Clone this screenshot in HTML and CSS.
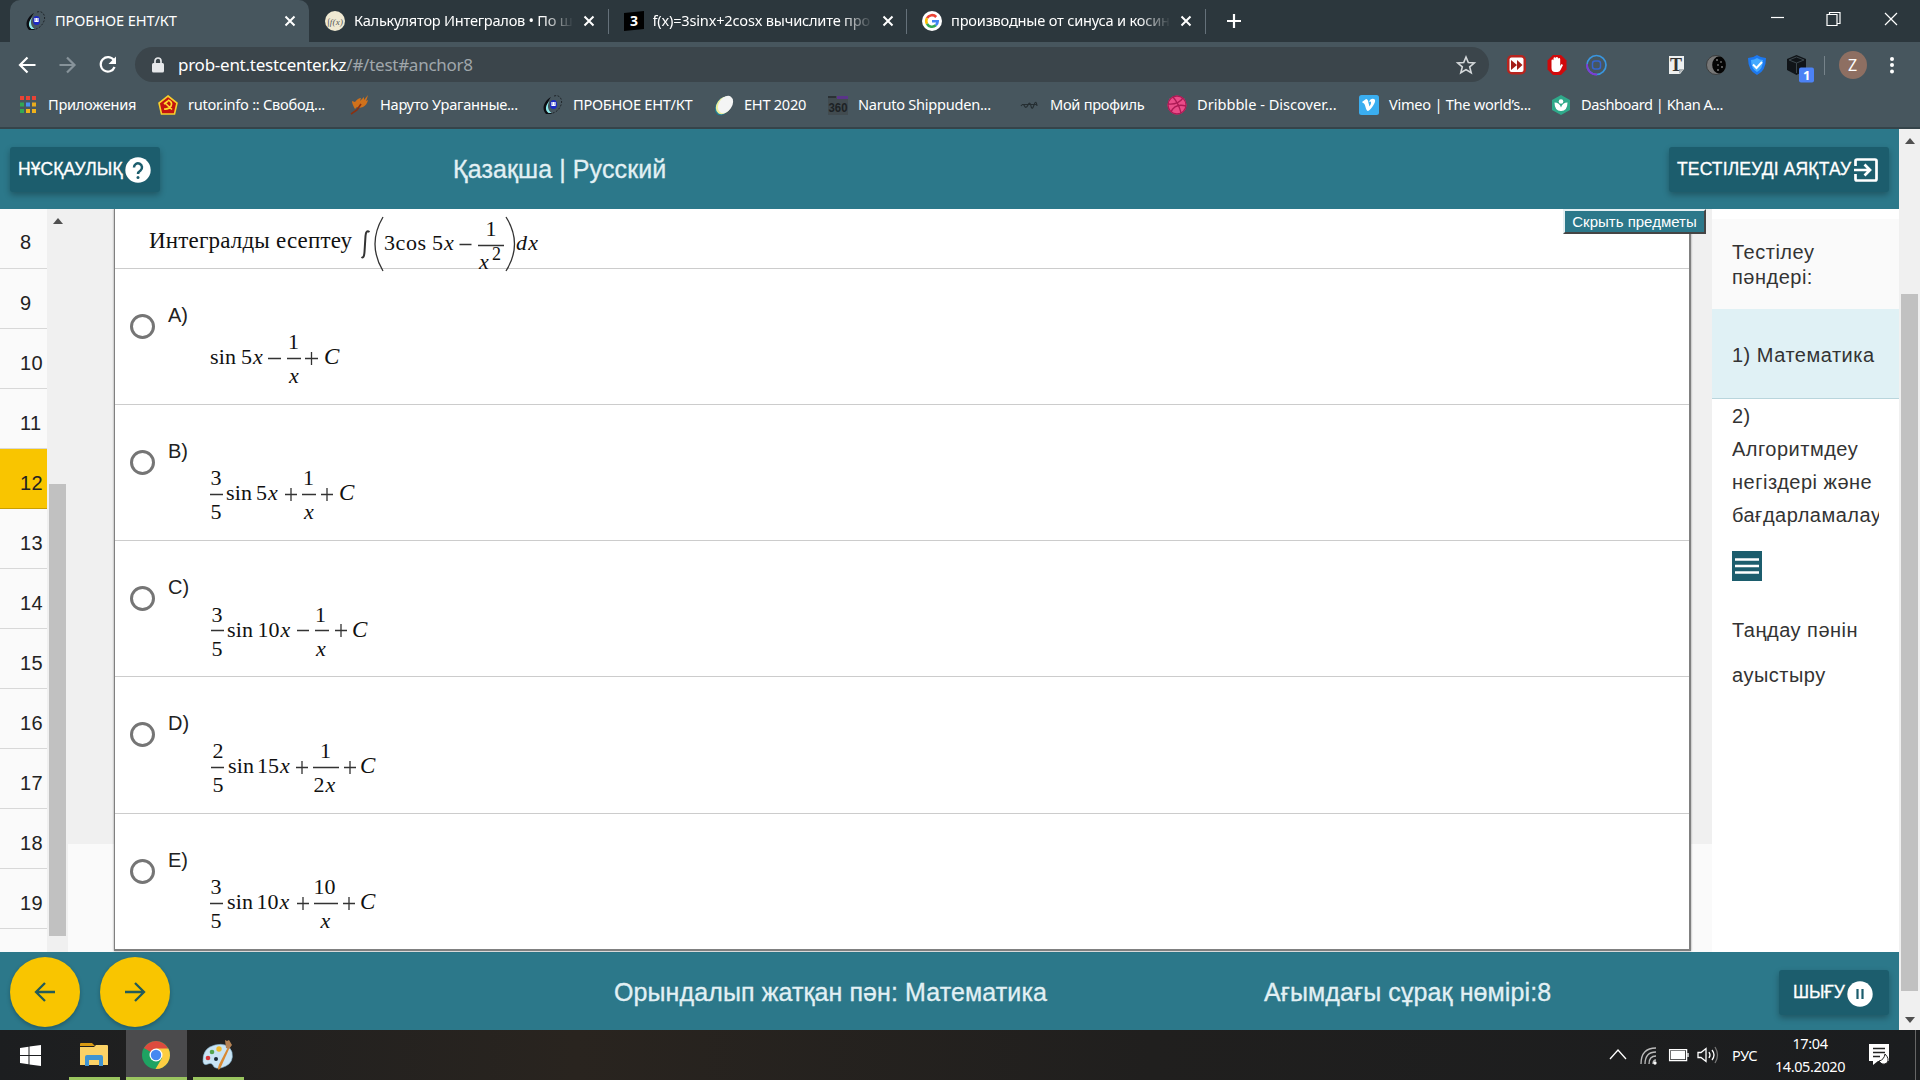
FILE: index.html
```html
<!DOCTYPE html>
<html lang="kk">
<head>
<meta charset="utf-8">
<title>ПРОБНОЕ ЕНТ/КТ</title>
<link rel="stylesheet" href="styles.css">
</head>
<body>
<svg width="0" height="0" class="defs">
  <symbol id="close" viewBox="0 0 12 12"><path d="M1.500 1.500l9 9M10.500 1.500l-9 9" stroke="#fff" stroke-width="2" fill="none"/></symbol>
  <symbol id="ent" viewBox="0 0 20 20"><path d="M8 2C1 6-2 14 3 19h7C3 17 3 8 8 2z" fill="#0c0d12"/><path d="M6.500 6c-4 4-5 9-1 12h3C4.500 15 4 10 6.500 6z" fill="#8fe9ea"/><ellipse cx="10.500" cy="9.500" rx="3.500" ry="4.500" fill="#1d2ac4"/><path d="M9 7v3.500h3V7M10.500 7v3" stroke="#fff" stroke-width="1.200" fill="none"/><path d="M11 1c6-2 9 4 7 9s-5 7-8 8" stroke="#20262b" stroke-dasharray="2 1.500" fill="none"/></symbol>
</svg>
<header class="tabs">
  <div class="tab active"><svg class="fav"><use href="#ent"/></svg><span class="title t1">ПРОБНОЕ ЕНТ/КТ</span><svg class="x"><use href="#close"/></svg></div>
  <div class="tab"><svg class="fav" viewBox="0 0 20 20"><circle cx="10" cy="10" r="10" fill="#efe9d2"/><text x="2" y="14" class="calc" textLength="16">∫f(x)</text></svg><span class="title fade t2">Калькулятор Интегралов • По ш</span><svg class="x"><use href="#close"/></svg></div>
  <div class="tab"><svg class="fav" viewBox="0 0 20 20"><path d="M0 2L20 0v18L0 20z" fill="#000"/><text x="6" y="15" class="three">3</text></svg><span class="title fade t3">f(x)=3sinx+2cosx вычислите про</span><svg class="x"><use href="#close"/></svg></div>
  <div class="tab"><svg class="fav" viewBox="0 0 20 20"><circle cx="10" cy="10" r="10" fill="#fff"/><g fill="none" stroke-width="2.600"><path d="M14.200 6A5.700 5.700 0 0 0 5 7.200" stroke="#ea4335"/><path d="M5 7.200a5.700 5.700 0 0 0 0 5.600" stroke="#fbbc05"/><path d="M5 12.800a5.700 5.700 0 0 0 8.800 1.500" stroke="#34a853"/><path d="M13.800 14.300A5.700 5.700 0 0 0 15.700 10.200H10" stroke="#4285f4"/></g></svg><span class="title fade t4">производные от синуса и косин</span><svg class="x"><use href="#close"/></svg></div>
  <svg class="plus" viewBox="0 0 16 16"><path d="M8 1v14M1 8h14" stroke="#fff" stroke-width="2.200"/></svg>
  <svg class="win" width="140" height="20" viewBox="0 0 140 20" fill="none" stroke="#fff" stroke-width="1.200"><path d="M6 8.500h13"/><path d="M62 5.500h10v11H62zM64.500 5V3.500H75v11H72.500"/><path d="M120 4l12 12M132 4l-12 12"/></svg>
</header>
<nav class="tools">
  <svg class="navs" width="110" height="24" viewBox="0 0 110 24" fill="none" stroke="#fff" stroke-width="2.200"><path d="M18.500 12H4M10.500 4.500L3 12l7.500 7.500"/><path d="M42.500 12H57M50 4.500L57.500 12 50 19.500" stroke="#87939a"/><path d="M97 7.500A7.200 7.200 0 1 0 97.600 14"/><path d="M99 3.500v7.500h-7.500z" fill="#fff" stroke="none"/></svg>
  <div class="url"><svg width="12" height="16" viewBox="0 0 12 16"><rect y="6" width="12" height="9.500" rx="1.500" fill="#e6e8ea"/><path d="M3 7V4a3 3 0 0 1 6 0v3" fill="none" stroke="#e6e8ea" stroke-width="1.700"/></svg><span class="addr">prob-ent.testcenter.kz<i>/#/test#anchor8</i></span><svg class="star" width="20" height="20" viewBox="0 0 20 20"><path d="M10 2l2.300 5.500 6 .5-4.600 3.900 1.500 5.900L10 14.600l-5.200 3.200 1.500-5.900L1.700 8l6-.5z" fill="none" stroke="#d5d9db" stroke-width="1.600"/></svg></div>
  <svg class="ext" width="420" height="40" viewBox="0 0 420 40">
    <rect x="7" y="10" width="19" height="19.500" rx="5" fill="#b8241e"/><rect x="9.500" y="12.500" width="14" height="14.500" rx="2" fill="#fff"/><path d="M11 15l6 5-6 5zM17 15l5.500 5-5.500 5z" fill="#a31d18"/>
    <path d="M53 10h8l5.500 5.500v9L61 30h-8l-5.500-5.500v-9z" fill="#d0090b"/><path d="M51.500 19.500v-4a1 1 0 0 1 2 0v-2a1 1 0 0 1 2.300 0v-.5a1.100 1.100 0 0 1 2.200 0v1a1 1 0 0 1 2.200 0v7l1.300-2 1.500 1-2.500 5q-1 2-3 2h-2.500q-3.500 0-3.500-4z" fill="#fff"/>
    <circle cx="96.500" cy="20" r="9.500" fill="none" stroke="#3a96df" stroke-width="1.700"/><path d="M87 19a9.500 9.500 0 0 0 10 10.500" fill="none" stroke="#7e3bd5" stroke-width="1.800"/><rect x="92.500" y="16" width="8" height="8" rx="2.500" fill="none" stroke="#3565d0" stroke-width="1.500"/>
    <path d="M169 11h15v13l-4 5h-11z" fill="#eef0f0"/><path d="M179 29v-5h5z" fill="#aeb4b6"/><text x="170" y="26" class="ty">T</text>
    <circle cx="216" cy="20" r="9.500" fill="#777" stroke="#333" stroke-width=".8"/><ellipse cx="219" cy="20" rx="6.800" ry="8.500" fill="#050505"/><g fill="#c5c5c5"><circle cx="217" cy="15" r=".8"/><circle cx="221" cy="17" r=".7"/><circle cx="218" cy="20" r=".7"/><circle cx="222" cy="22" r=".8"/><circle cx="218" cy="25" r=".8"/></g>
    <path d="M257 10q4 3 9 3 0 13-9 17-9-4-9-17 5 0 9-3z" fill="#1d78ef"/><path d="M257 13q3 2 6 2 0 9-6 12-6-3-6-12 3 0 6-2z" fill="#45aaff"/><path d="M253 19.500l3.500 3.500 5.500-6" fill="none" stroke="#fff" stroke-width="2"/>
    <path d="M287 14l9.500-4 9.500 4v11l-9.500 5-9.500-5z" fill="#101418"/><path d="M289 15l7.500-3 7.500 3-7.500 3zM296.500 18v10" stroke="#3c474d" fill="none"/>
    <rect x="299" y="22.500" width="15" height="15" rx="2" fill="#4c82f5"/><text x="303" y="35" class="badge">1</text>
    <path d="M324.500 11v19" stroke="#76838a"/><circle cx="353" cy="20" r="14" fill="#8e6f62"/><text x="348" y="25.500" class="av">Z</text><g fill="#fff"><circle cx="392" cy="14" r="2"/><circle cx="392" cy="20" r="2"/><circle cx="392" cy="26.500" r="2"/></g>
  </svg>
</nav>
<nav class="marks">
  <a class="m1"><svg viewBox="0 0 20 20"><g fill="#ea4335"><path d="M2 1h4v4H2zM8 1h4v4H8zM14 1h4v4h-4z"/></g><path d="M2 7.500h4v4H2z" fill="#34a853"/><path d="M8 7.500h4v4H8z" fill="#4a90f5"/><path d="M14 7.500h4v4h-4z" fill="#e8ab1c"/><path d="M2 14h4v4H2z" fill="#34a853"/><path d="M8 14h4v4H8zM14 14h4v4h-4z" fill="#f0b21a"/></svg><span>Приложения</span></a>
  <a class="m2"><svg viewBox="0 0 20 20"><path d="M10 1L19 8l-2.500 11h-13L1 8z" fill="#c4130f" stroke="#f8cf2b" stroke-width="1.600"/><path d="M10 5q5 2 3 6-2 3.500-7 3M7 8l7 6.500M6 9l4-3" fill="none" stroke="#ffd92e" stroke-width="1.700"/></svg><span>rutor.info :: Свобод...</span></a>
  <a class="m3"><svg viewBox="0 0 20 20"><path d="M18 0q-1 4-2 6l2-1q-1 5-5 7l-4 1-2-1-2 2Q2 9 2 6l3 1q3-4 6-4l-1 3 4-4v3z" fill="#cf711b"/><path d="M1 19l6-4 4-6" stroke="#8b3010" stroke-width="1.600" fill="none"/></svg><span>Наруто Ураганные...</span></a>
  <a class="m4"><svg><use href="#ent"/></svg><span>ПРОБНОЕ ЕНТ/КТ</span></a>
  <a class="m5"><svg viewBox="0 0 20 20"><ellipse cx="9" cy="11" rx="7" ry="10" transform="rotate(35 9 11)" fill="#1f7f96"/><ellipse cx="10" cy="10.500" rx="7" ry="9.500" transform="rotate(35 10 10)" fill="#eced9b"/><ellipse cx="11.500" cy="9.500" rx="6.500" ry="9.500" transform="rotate(35 11.500 9.500)" fill="#f4f5f5"/></svg><span>ЕНТ 2020</span></a>
  <a class="m6"><svg viewBox="0 0 20 20"><path d="M0 1h20v19H0z" fill="#414b50"/><path d="M9 1h11v3H9z" fill="#5a3489"/><path d="M0 1h8v2H0z" fill="#2b3135"/><text x="0.500" y="17" textLength="19" lengthAdjust="spacingAndGlyphs" class="n360">360</text></svg><span>Naruto Shippuden...</span></a>
  <a class="m7"><svg viewBox="0 0 20 20"><path d="M1 11q2-3 3.500 0t3.500-1 3 1 3-1 3 1M2 9.500h15" fill="none" stroke="#252e32" stroke-width="1.200"/></svg><span>Мой профиль</span></a>
  <a class="m8"><svg viewBox="0 0 20 20"><circle cx="10" cy="10" r="9.500" fill="#ea4c89"/><g fill="none" stroke="#ad1a55" stroke-width="1.300"><circle cx="10" cy="10" r="9"/><path d="M6 2q6 7 8 16M1 9q10 1 15-6M4 17q4-9 15-6"/></g></svg><span>Dribbble - Discover...</span></a>
  <a class="m9"><svg viewBox="0 0 20 20"><rect width="20" height="20" rx="2.500" fill="#3aaef0"/><path d="M3 7l4-3q2 0 2.500 4l1 3.500q2-3 1.500-4.500-.5-.8-2 0 1.500-4 5-3 2.500 1-.5 6T9 16q-1.500 0-2.500-4T4 8z" fill="#fff"/></svg><span>Vimeo | The world’s...</span></a>
  <a class="m10"><svg viewBox="0 0 20 20"><path d="M10 0l9 5v10l-9 5-9-5V5z" fill="#2fa98a"/><circle cx="10" cy="6.500" r="2.300" fill="#fff"/><path d="M3.500 7.500q5 0 6.500 5 1.500-5 6.500-5 0 8.500-6.500 8.500T3.500 7.500z" fill="#fff"/></svg><span>Dashboard | Khan A...</span></a>
</nav>
<main class="page">
  <div class="view">
    <div class="bar top">
      <button class="btn help">НҰСҚАУЛЫҚ<svg width="26" height="26" viewBox="0 0 26 26"><circle cx="13" cy="13" r="12.700" fill="#fff"/><path d="M9 10.500a4 4 0 1 1 6.500 3Q13 15 13 17" fill="none" stroke="#1c5d6d" stroke-width="2.500"/><circle cx="13" cy="20.500" r="1.500" fill="#1c5d6d"/></svg></button>
      <span class="lang">Қазақша | Русский</span>
      <button class="btn finish">ТЕСТІЛЕУДІ АЯҚТАУ<svg width="24" height="24" viewBox="0 0 24 24" fill="none" stroke="#fff" stroke-width="2.700"><path d="M1.500 8V3q0-1.500 1.500-1.500h18q1.500 0 1.500 1.500v18q0 1.500-1.500 1.500H3q-1.500 0-1.500-1.500v-5M0 12h15M10.500 6.500L16 12l-5.500 5.500"/></svg></button>
    </div>
    <div class="body">
      <ol class="nums"><li>8</li><li>9</li><li>10</li><li>11</li><li class="on">12</li><li>13</li><li>14</li><li>15</li><li>16</li><li>17</li><li>18</li><li>19</li><li></li></ol>
      <div class="innerbar"><svg width="10" height="6" viewBox="0 0 10 6"><path d="M0 6l5-6 5 6z" fill="#505050"/></svg><div class="thumb"></div></div>
      <section class="center">
        <button class="hide">Скрыть предметы</button>
        <div class="card">
          <div class="q">
            <svg class="f" width="600" height="70" viewBox="115 209 600 70">
              <text x="149" y="248" textLength="203" class="up">Интегралды есептеу</text>
              <path d="M369.500 232q-3.500-2.500-4 4l-1 16q-.5 7-3 5" fill="none" class="thick"/>
              <path d="M383 217q-16 27 0 54M506 217q17 27 0 54" fill="none"/>
              <text x="384" y="250" textLength="42">3cos</text><text x="432" y="250">5<tspan class="it" dx="1">x</tspan></text>
              <path d="M459.500 244.500h12M478 245.500h26"/>
              <text x="485.500" y="236">1</text><text x="479" y="269" class="it">x</text><text x="492" y="260" class="sup">2</text>
              <text x="516" y="250" class="it" textLength="22">dx</text>
            </svg>
          </div>
          <div class="row"><i class="radio"></i><b>A)</b><svg class="f" width="300" height="100" viewBox="0 0 300 100">
            <g transform="translate(-196 -303)"><text x="210" y="364" textLength="26">sin</text><text x="241" y="364">5<tspan class="it" dx="1">x</tspan></text><path d="M268 358.500h13M287 358.500h14M305 358.500h13M311.500 352v13"/><text x="288" y="349">1</text><text x="289" y="383" class="it">x</text><text x="324" y="364" class="it cc">C</text></g></svg></div>
          <div class="row"><i class="radio"></i><b>B)</b><svg class="f" width="300" height="100" viewBox="0 0 300 100">
            <g transform="translate(-196 -439)"><text x="210.500" y="485">3</text><text x="210.500" y="519">5</text><text x="226" y="500" textLength="26">sin</text><text x="256" y="500">5<tspan class="it" dx="1">x</tspan></text><path d="M210 494.500h13M285 494.500h12M291 488v13M302 494.500h14M321 494.500h12M327 488v13"/><text x="303" y="485">1</text><text x="304" y="519" class="it">x</text><text x="339" y="500" class="it cc">C</text></g></svg></div>
          <div class="row"><i class="radio"></i><b>C)</b><svg class="f" width="300" height="100" viewBox="0 0 300 100">
            <g transform="translate(-196 -575)"><text x="211.500" y="622">3</text><text x="211.500" y="656">5</text><text x="227" y="637" textLength="26">sin</text><text x="257.500" y="637">10<tspan class="it" dx="1">x</tspan></text><path d="M211 630.500h13M297 630.500h12M315 630.500h14M335 630.500h12M341 624v13"/><text x="315" y="622">1</text><text x="316" y="656" class="it">x</text><text x="352" y="637" class="it cc">C</text></g></svg></div>
          <div class="row d"><i class="radio"></i><b>D)</b><svg class="f" width="300" height="100" viewBox="0 0 300 100">
            <g transform="translate(-196 -711)"><text x="212.500" y="758">2</text><text x="212.500" y="792">5</text><text x="228" y="773" textLength="26">sin</text><text x="257" y="773">15<tspan class="it" dx="1">x</tspan></text><path d="M211 767.500h13M296 767.500h12M302 761v13M313 767.500h26M344 767.500h12M350 761v13"/><text x="320" y="758">1</text><text x="313.500" y="792">2<tspan class="it" dx="1">x</tspan></text><text x="360" y="773" class="it cc">C</text></g></svg></div>
          <div class="row e"><i class="radio"></i><b>E)</b><svg class="f" width="300" height="100" viewBox="0 0 300 100">
            <g transform="translate(-196 -848)"><text x="210.500" y="894">3</text><text x="210.500" y="928">5</text><text x="227" y="909" textLength="26">sin</text><text x="256.500" y="909">10<tspan class="it" dx="1">x</tspan></text><path d="M210 903.500h13M297 903.500h12M303 897v13M314 903.500h24M343 903.500h12M349 897v13"/><text x="313.500" y="894">10</text><text x="320.500" y="928" class="it">x</text><text x="360" y="909" class="it cc">C</text></g></svg></div>
        </div>
      </section>
      <aside class="side">
        <h2>Тестілеу<br>пәндері:</h2>
        <p class="sel">1) Математика</p>
        <p class="algo">2)<br>Алгоритмдеу<br>негіздері және<br>бағдарламалау</p>
        <svg class="menu" width="30" height="30" viewBox="0 0 30 30"><path d="M0 0h30v30H0z" fill="#1c5d6d"/><path d="M3 8.500h24M3 15h24M3 21.500h24" stroke="#fff" stroke-width="2.600"/></svg>
        <p class="chg">Таңдау пәнін<br>ауыстыру</p>
      </aside>
    </div>
    <div class="bar bottom">
      <button class="round"><svg width="22" height="22" viewBox="0 0 22 22"><path d="M21 11H2.500M11 2L2 11l9 9"/></svg></button>
      <button class="round"><svg width="22" height="22" viewBox="0 0 22 22"><path d="M1 11h18.500M11 2l9 9-9 9"/></svg></button>
      <span class="subj">Орындалып жатқан пән: Математика</span>
      <span class="curr">Ағымдағы сұрақ нөмірі:8</span>
      <button class="btn exit">ШЫҒУ<svg width="26" height="26" viewBox="0 0 26 26"><circle cx="13" cy="13" r="12.700" fill="#fff"/><path d="M10.500 8v10M15.500 8v10" stroke="#1c5d6d" stroke-width="2.200"/></svg></button>
    </div>
  </div>
  <div class="scroll"><svg width="10" height="6" viewBox="0 0 10 6"><path d="M0 6l5-6 5 6z" fill="#505050"/></svg><div class="thumb"></div><svg width="10" height="6" viewBox="0 0 10 6"><path d="M0 0l5 6 5-6z" fill="#505050"/></svg></div>
</main>
<footer class="task">
  <div class="app start"><svg width="21" height="21" viewBox="0 0 21 21"><path d="M0 3l8.500-1.200V10H0zM9.500 1.600L21 0v10H9.500zM0 11h8.500v8.200L0 18zM9.500 11H21v10l-11.500-1.600z" fill="#fff"/></svg></div>
  <div class="app fold"><svg width="28" height="26" viewBox="0 0 28 26"><path d="M0 2q0-1 1-1h11l3 3H0z" fill="#d89a12"/><path d="M0 5q0 0 14 0l2-2h11q1 0 1 1v19H0z" fill="#fbd266"/><path d="M5 24v-9q0-2 2-2h14q2 0 2 2v9h-4v-6H9v6z" fill="#3f94d2"/></svg></div>
  <div class="app chrome"><svg width="28" height="28" viewBox="0 0 28 28"><circle cx="14" cy="14" r="14" fill="#1ea362"/><path d="M14 14L1.900 7A14 14 0 0 1 26.100 7z" fill="#dd4b3e"/><path d="M14 7.500H26.400A14 14 0 0 1 13.500 28L20 17z" fill="#fdcd42"/><circle cx="14" cy="14" r="6.500" fill="#fff"/><circle cx="14" cy="14" r="5.200" fill="#4688f1"/></svg></div>
  <div class="app paint"><svg width="30" height="30" viewBox="0 0 30 30"><path d="M0 22Q-1 8 12 5t17 7q2 10-6 14t-12 1q-2-5-6-3-4 2-5-2z" fill="#c9e4f4" stroke="#7ba9c4" stroke-width=".6"/><circle cx="5" cy="18" r="2.300" fill="#d8353a"/><circle cx="9" cy="12" r="2.300" fill="#54a550"/><circle cx="16" cy="9" r="2.700" fill="#f0b92c"/><circle cx="13" cy="19" r="2" fill="#1b2b38"/><path d="M25 7l1.500 1-9 20q-1 2-2.500 1.500 0-3 1-5z" fill="#d98932"/><path d="M22 0l2 1 2-1 3 5-3 4-3-1z" fill="#b58355"/></svg></div>
  <svg class="tray" width="150" height="30" viewBox="0 0 150 30" fill="none" stroke="#fff" stroke-width="1.300"><path d="M10 19l8-9 8 9"/><g><path d="M41 24q0-16 15-16M45 24q0-12 11-12M49 24q0-8 7-8M53 24q0-4 3-4" stroke="#bbb"/><circle cx="55" cy="23" r="1" fill="#fff"/></g><path d="M69.600 9.600h17v11h-17z"/><path d="M71.500 11.500h13v7h-13z" fill="#fff"/><path d="M88 13v4"/><path d="M98 12.500h3l5-4v13l-5-4h-3zM109 12q2 3 0 6M112 10q4 5 0 10"/><path d="M115 7q5 8 0 16" stroke="#777"/></svg>
  <span class="rus">РУС</span>
  <div class="clock">17:04<br>14.05.2020</div>
  <svg class="note" width="22" height="22" viewBox="0 0 22 22"><path d="M0 0h20v17H9l-5 4v-4H0z" fill="#fff"/><path d="M4 4.500h12M4 8.500h12M4 12.500h7" stroke="#222" stroke-width="1.500"/><path d="M16 10q-1 6-6 7 3 5 8 2 3-4-2-9z" fill="#fff" stroke="#222"/></svg>
  <i class="peek"></i>
</footer>
</body>
</html>
```

FILE: styles.css
```css
* { box-sizing: border-box; }
body { margin: 0; width: 1920px; height: 1080px; overflow: hidden; display: flex; flex-direction: column; font-family: "Liberation Sans", Arial, sans-serif; }
svg { flex: none; display: block; overflow: visible; }
.defs { position: absolute; }
button { border: 0; font: inherit; padding: 0; }
.tabs, .tools, .marks, .task { font-family: "Noto Sans", "Open Sans", sans-serif; color: #fff; }
.tabs { height: 42px; flex: none; display: flex; background: #2c373d; padding-left: 10px; align-items: center; }
.tab { width: 299px; height: 42px; display: flex; align-items: center; padding: 0 13px 1px 16px; position: relative; }
.tab:nth-child(2), .tab:nth-child(3) { width: 298.500px; }
.tab.active { background: #47565e; border-radius: 10px 10px 0 0; }
.tab:nth-child(n+2)::after { content: ""; width: 1px; height: 25px; background: #65717a; position: absolute; right: -1px; top: 9px; }
.fav { width: 20px; height: 20px; margin-right: 9px; }
.title { width: 222px; flex: none; font-size: 14.600px; white-space: nowrap; overflow: hidden; line-height: 24px; margin: -1px 7px 0 0; }
.t1 { letter-spacing: -.1px; }
.t2 { letter-spacing: -.25px; }
.t3 { letter-spacing: -.2px; }
.t4 { letter-spacing: -.2px; }
.fade { -webkit-mask-image: linear-gradient(90deg, #000 85%, transparent 99%); mask-image: linear-gradient(90deg, #000 85%, transparent 99%); }
.x { width: 12px; height: 12px; }
.calc { font: italic 9px "Liberation Serif", serif; fill: #555; }
.three { font: bold 14px "Noto Sans", sans-serif; fill: #fff; }
.plus { width: 16px; height: 16px; margin-left: 21px; }
.win { margin: -5px 15px 0 auto; }
.tools { height: 42px; flex: none; display: flex; align-items: center; background: #47565e; padding-left: 17px; }
.navs { margin: 3px 8px 0 0; }
.url { width: 1354px; height: 35px; border-radius: 18px; background: #3b454b; margin-top: 3px; display: flex; align-items: center; padding: 0 13px 0 17px; }
.addr { font-size: 17px; margin: -1px 0 0 14px; letter-spacing: -.26px; }
.addr i { font-style: normal; color: #a0a7ab; }
.star { margin-left: auto; }
.ext { margin: 3px 0 0 11px; }
.ty { font: bold 18px "Liberation Serif", serif; fill: #333; }
.badge { font: bold 13px "Noto Sans", sans-serif; fill: #fff; }
.av { font: 16px "Noto Sans", sans-serif; fill: #fff; }
.n360 { font: bold 13px "Liberation Sans", sans-serif; fill: #1d2225; }
.marks { height: 45px; flex: none; background: #47565e; border-bottom: 2px solid #35444a; display: flex; padding: 0 0 2px 18px; font-size: 14.600px; }
.marks a { display: flex; align-items: center; white-space: nowrap; }
.marks svg { width: 20px; height: 20px; margin-right: 10px; }
.marks span { letter-spacing: -.27px; margin-top: -2px; }
.m1 { width: 140px; } .m2 { width: 192px; } .m3 { width: 193px; } .m4 { width: 171px; } .m5 { width: 114px; }
.m6 { width: 192px; } .m7 { width: 147px; } .m8 { width: 192px; } .m9 { width: 192px; }
.marks .m8 span { letter-spacing: 0; }
.marks .m10 span { letter-spacing: -.45px; }
.page { height: 901px; flex: none; display: flex; }
.view { width: 1899px; display: flex; flex-direction: column; }
.bar { background: #2c788a; color: #e2f0f4; display: flex; align-items: center; font-size: 25px; flex: none; }
.top { height: 80px; padding: 0 10px; }
.bottom { height: 78px; padding: 0 10px; }
.btn { height: 45px; background: #1c5d6d; color: #fff; border-radius: 3px; box-shadow: 0 3px 6px rgba(0,0,0,.28); display: flex; align-items: center; font-size: 17.500px; white-space: nowrap; -webkit-text-stroke: .3px #fff; }
.help { width: 150px; padding-left: 8px; letter-spacing: .1px; }
.help svg { margin: 2px 0 0 2px; }
.lang { margin: 1px 0 0 293px; white-space: nowrap; letter-spacing: .1px; -webkit-text-stroke: .3px #e2f0f4; }
.finish { width: 220px; margin-left: auto; padding-left: 8px; letter-spacing: .15px; }
.finish svg { margin: 2px 0 0 3px; }
.body { height: 743px; display: flex; background: #fafafa; }
.nums { list-style: none; width: 47px; height: 743px; overflow: hidden; margin: 0; padding: 0; font-size: 20px; color: #222; }
.nums li { height: 60px; border-bottom: 1px solid #d8d8d8; padding: 8px 0 0 20px; line-height: 52px; letter-spacing: .3px; }
.nums li:first-child { padding-top: 7px; }
.nums .on { background: #f9c500; border-color: #c99f00; }
.innerbar { width: 21px; background: #f0f0f0; display: flex; flex-direction: column; align-items: center; padding-top: 9px; }
.innerbar .thumb { width: 17px; height: 452px; margin-top: 260px; background: #c1c1c1; }
.center { width: 1644px; position: relative; padding-left: 46px; background: linear-gradient(#f0f0f0 635px, #fafafa 635px); }
.card { width: 1577px; height: 742px; background: #fff; border: solid #808080; border-width: 0 2px 2px 1px; box-shadow: 0 0 2px rgba(0,0,0,.4); clip-path: inset(0 -3px -2px -3px); }
.hide { position: absolute; z-index: 1; left: 1495px; top: 0; width: 143px; height: 25px; background: #2c788a; color: #fff; font-size: 15px; border: 2px outset #ddd; border-color: #e4eff2 #999 #999 #e4eff2; white-space: nowrap; }
.q { height: 60px; border-bottom: 1px solid #ccc; }
.row { height: 136px; border-bottom: 1px solid #ccc; display: flex; padding: 34px 0 0 15px; }
.row.d { height: 137px; }
.row.e { height: 137px; border: 0; }
.radio { width: 25px; height: 25px; border: 3px solid #757575; border-radius: 50%; margin-top: 11px; }
.row b { font-weight: 400; font-size: 20px; line-height: 24px; width: 28px; margin: 0 0 0 13px; color: #222; }
.f { font-family: "Liberation Serif", "Times New Roman", serif; font-size: 22px; fill: #111; }
.f path { stroke: #333; stroke-width: 1.300; }
.f .thick { stroke-width: 2; }
.up { font-size: 23px; }
.it { font-style: italic; }
.cc { font-size: 23px; }
.sup { font-size: 18px; }
.side { width: 187px; background: #fff; padding-top: 10px; color: #333; font-size: 20px; letter-spacing: .5px; }
.side h2 { margin: 0; height: 90px; background: #fafafa; font-size: 20px; font-weight: 400; line-height: 25px; padding: 21px 0 0 20px; }
.side p { margin: 0; white-space: nowrap; }
.side .sel { height: 90px; line-height: 92px; padding-left: 20px; background: #e0f1f5; border-bottom: 1px solid #b9d5dc; }
.side .algo { margin: 1px 20px 0; line-height: 33px; overflow: hidden; }
.menu { margin: 19px 0 0 20px; }
.side .chg { margin: 27px 0 0 20px; line-height: 45px; }
.round { width: 70px; height: 70px; border-radius: 50%; background: #f9c500; display: flex; align-items: center; justify-content: center; box-shadow: 0 2px 4px rgba(0,0,0,.25); margin-right: 20px; }
.round path { fill: none; stroke: #235c59; stroke-width: 2.300; }
.bottom .round { margin-top: 2px; }
.subj { margin: 3px 0 0 424px; width: 650px; white-space: nowrap; letter-spacing: .1px; -webkit-text-stroke: .3px #e2f0f4; }
.curr { margin-top: 3px; white-space: nowrap; letter-spacing: .1px; -webkit-text-stroke: .3px #e2f0f4; }
.exit { width: 110px; margin: 3px 0 0 auto; padding-left: 14px; letter-spacing: -.1px; }
.exit svg { margin: 2px 0 0 2px; }
.scroll { width: 21px; background: #f0f0f0; display: flex; flex-direction: column; align-items: center; padding: 9px 0 7px; }
.scroll .thumb { width: 17px; height: 697px; margin: 150px 0 auto; background: #c1c1c1; }
.task { height: 50px; flex: none; display: flex; align-items: center; background: linear-gradient(90deg, #1c1e20, #29241f 30%, #201f1e 60%, #1b1d1f); }
.app { height: 50px; display: flex; align-items: center; justify-content: center; }
.start { width: 60px; }
.fold { width: 51px; margin: 0 6px 0 9px; border-bottom: 3px solid #9ac55f; }
.chrome { width: 61px; background: #4b4b4d; border-bottom: 3px solid #9ac55f; }
.fold svg, .chrome svg, .paint svg { margin: 3px 2px 0 0; }
.paint { width: 51px; margin-left: 6px; border-bottom: 3px solid #9ac55f; }
.tray { margin-left: 1356px; }
.rus { font-size: 14.500px; margin-left: -18px; width: 40px; letter-spacing: -.3px; }
.clock { width: 76px; text-align: center; font-size: 14.500px; line-height: 23px; letter-spacing: -.4px; }
.note { margin-left: 21px; }
.peek { width: 1px; height: 50px; background: #666; margin-left: auto; margin-right: 4px; }
```
